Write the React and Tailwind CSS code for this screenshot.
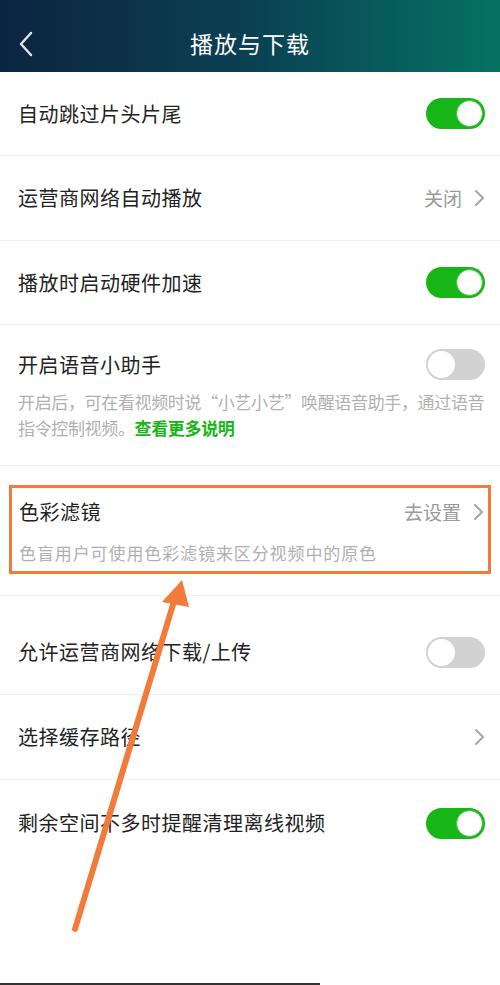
import React from 'react'

const font = { fontFamily: '"Noto Sans CJK SC", "Noto Sans", sans-serif' }

function Toggle({ on }) {
  return on ? (
    <div className="w-[59px] h-[31px] rounded-full bg-[#17b617] flex items-center justify-end pr-[2px]">
      <div className="w-[27px] h-[27px] rounded-full bg-white border border-[#3fbf3f]" />
    </div>
  ) : (
    <div className="w-[59px] h-[31px] rounded-full bg-[#d2d2d2] flex items-center pl-[2px]">
      <div className="w-[27px] h-[27px] rounded-full bg-white" />
    </div>
  )
}

function Chevron() {
  return (
    <svg width="12" height="18" viewBox="0 0 12 18" className="ml-3">
      <path d="M2 2l7 7-7 7" fill="none" stroke="#a5a5a5" strokeWidth="2" strokeLinecap="round" strokeLinejoin="round" />
    </svg>
  )
}

function Row({ title, right, className = '' }) {
  return (
    <div className={`flex items-center justify-between pl-[18px] pr-[14px] border-b border-[#f1f1f1] ${className}`}>
      <span className="text-[20px] tracking-[0.5px] text-[#222]">{title}</span>
      {right}
    </div>
  )
}

export default function App() {
  return (
    <div className="relative w-[500px] h-[985px] overflow-hidden bg-white" style={font}>
      <div className="h-[72px] bg-gradient-to-r from-[#0c2441] via-[#0a4152] to-[#057262] relative flex items-center justify-center pt-[14px]">
        <svg width="16" height="26" viewBox="0 0 16 26" className="absolute left-[18px] top-[31px]">
          <path d="M13 2L3 13l10 11" fill="none" stroke="#dfe6ea" strokeWidth="2.4" strokeLinecap="round" strokeLinejoin="round" />
        </svg>
        <span className="text-[23px] text-white tracking-[1px]">播放与下载</span>
      </div>

      <Row title="自动跳过片头片尾" right={<Toggle on />} className="h-[84px] pr-[15px]" />
      <Row
        title="运营商网络自动播放"
        right={
          <div className="flex items-center">
            <span className="text-[19px] text-[#9a9a9a]">关闭</span>
            <Chevron />
          </div>
        }
        className="h-[85px]"
      />
      <Row title="播放时启动硬件加速" right={<Toggle on />} className="h-[84px] pr-[15px]" />

      <div className="border-b border-[#f1f1f1] pl-[18px] pr-[15px] pt-[24px] pb-[24px]">
        <div className="flex items-center justify-between">
          <span className="text-[20px] tracking-[0.5px] text-[#222]">开启语音小助手</span>
          <Toggle />
        </div>
        <p className="mt-[9px] text-[17px] leading-[26px] tracking-[-0.35px] text-[#b0b0b0] whitespace-nowrap">
          开启后，可在看视频时说“小艺小艺”唤醒语音助手，通过语音
          <br />
          指令控制视频。<span className="text-[#17b617] font-bold">查看更多说明</span>
        </p>
      </div>

      <div className="border-b border-[#f1f1f1] pt-[19px] pb-[21px] px-[9px]">
        <div className="border-[3px] border-[#f27a3b] pl-[7px] pr-[3px] pt-[9px] pb-[6px]">
          <div className="flex items-center justify-between">
            <span className="text-[20px] tracking-[0.5px] text-[#222]">色彩滤镜</span>
            <div className="flex items-center">
              <span className="text-[19px] text-[#9a9a9a]">去设置</span>
              <Chevron />
            </div>
          </div>
          <p className="mt-[14px] text-[17px] leading-[24px] tracking-[0.9px] text-[#b0b0b0]">色盲用户可使用色彩滤镜来区分视频中的原色</p>
        </div>
      </div>

      <Row title="允许运营商网络下载/上传" right={<Toggle />} className="h-[99px] pt-[14px] pr-[15px]" />
      <Row title="选择缓存路径" right={<Chevron />} className="h-[85px]" />
      <Row title="剩余空间不多时提醒清理离线视频" right={<Toggle on />} className="h-[86px] pr-[15px] border-b-0" />

      <div className="absolute left-0 bottom-0 w-[320px] h-[2px] bg-[#333]" />

      <svg className="absolute inset-0 pointer-events-none" width="500" height="985" viewBox="0 0 500 985">
        <line x1="75" y1="929" x2="175" y2="598" stroke="#f27a3b" strokeWidth="6" strokeLinecap="round" />
        <polygon points="182,580 162,602 189,607" fill="#f27a3b" />
      </svg>
    </div>
  )
}
